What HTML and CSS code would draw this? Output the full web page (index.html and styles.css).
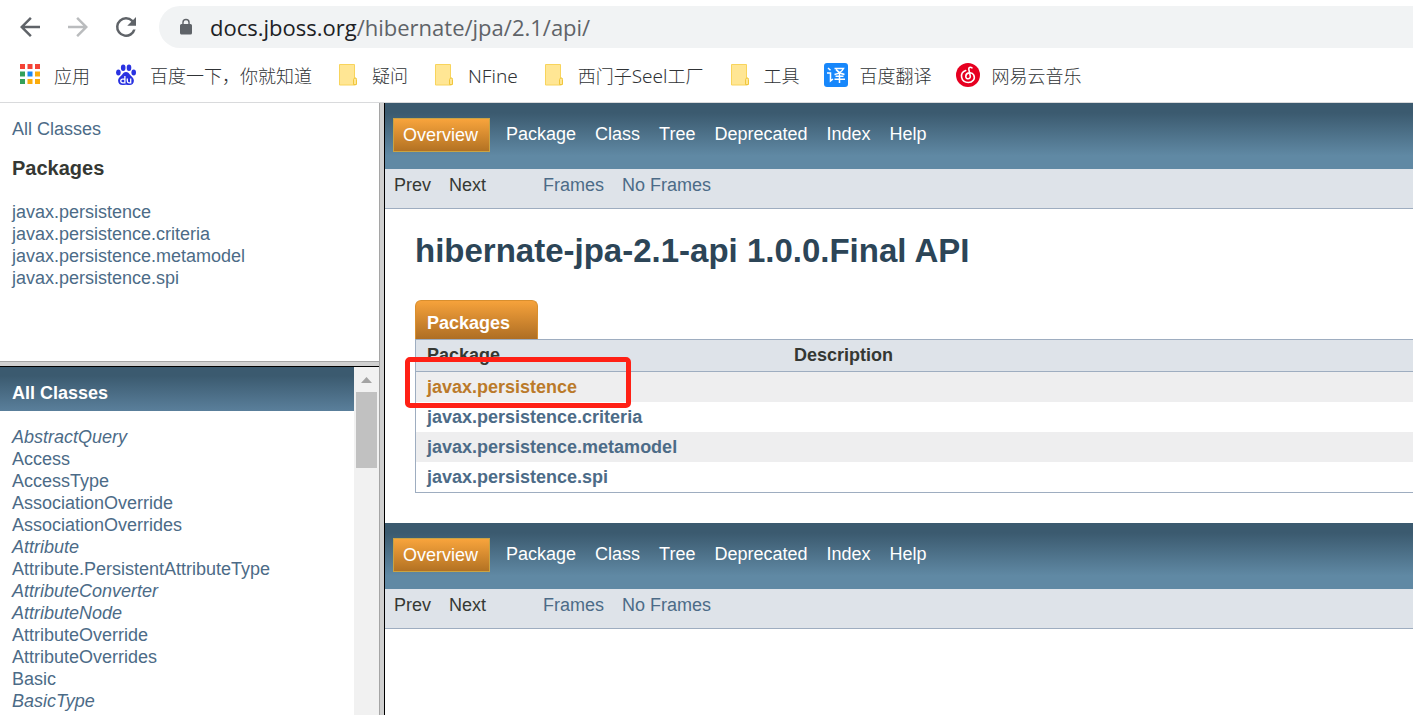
FILE: index.html
```html
<!DOCTYPE html>
<html lang="en">
<head>
<meta charset="utf-8">
<title>hibernate-jpa-2.1-api 1.0.0.Final API</title>
<link rel="stylesheet" href="styles.css">
</head>
<body>
<header class="browser">
  <div class="toolbar">
    <button class="tool" type="button" aria-label="Back"><svg viewBox="0 0 24 24"><path d="M20 11H7.8l5.6-5.6L12 4l-8 8 8 8 1.4-1.4L7.8 13H20z"/></svg></button>
    <button class="tool tool-off" type="button" aria-label="Forward" disabled><svg viewBox="0 0 24 24"><path d="M4 11h12.2l-5.6-5.6L12 4l8 8-8 8-1.4-1.4 5.6-5.6H4z"/></svg></button>
    <button class="tool" type="button" aria-label="Reload"><svg viewBox="0 0 24 24"><path d="M17.65 6.35A7.95 7.95 0 0 0 12 4a8 8 0 1 0 7.73 10h-2.08A6 6 0 1 1 12 6c1.66 0 3.14.69 4.22 1.78L13 11h7V4z"/></svg></button>
    <div class="address">
      <svg class="lock" viewBox="0 0 24 24"><path d="M18 8h-1V6A5 5 0 0 0 7 6v2H6a2 2 0 0 0-2 2v10c0 1.100.9 2 2 2h12a2 2 0 0 0 2-2V10a2 2 0 0 0-2-2zM8.900 8V6a3.100 3.100 0 0 1 6.200 0v2z"/></svg>
      <div class="url" role="textbox" aria-label="Address" contenteditable="true" spellcheck="false"><span class="host">docs.jboss.org</span>/hibernate/jpa/2.1/api/</div>
    </div>
  </div>
  <nav class="bookmarks" lang="zh-CN">
    <a class="bookmark" href="#"><svg class="mark" viewBox="0 0 24 24"><g fill="#f44336"><path d="M2 1h5v5H2zM9.500 1h5v5h-5zM17 1h5v5h-5z"/></g><path fill="#34a05a" d="M2 8.500h5v5H2zM2 16h5v5H2z"/><path fill="#1e88f0" d="M9.500 8.500h5v5h-5z"/><path fill="#fbac0c" d="M17 8.500h5v5h-5zM9.500 16h5v5h-5zM17 16h5v5h-5z"/></svg>应用</a>
    <a class="bookmark" href="#"><svg class="mark" viewBox="0 0 24 24"><g fill="#2932e1"><ellipse cx="4.400" cy="9.600" rx="2.300" ry="3"/><ellipse cx="9.200" cy="4.700" rx="2.300" ry="3.200"/><ellipse cx="15" cy="4.700" rx="2.300" ry="3.200"/><ellipse cx="19.700" cy="9.600" rx="2.300" ry="3"/><path d="M12 9c-2 0-3 1.400-4 2.700-1.200 1.600-3.900 2.900-3.900 6 0 2.700 1.900 4.300 4.300 4.300 1.400 0 2.200-.3 3.600-.3s2.200.3 3.600.3c2.400 0 4.300-1.600 4.300-4.300 0-3.100-2.700-4.400-3.900-6C15 10.400 14 9 12 9z"/></g><path fill="none" stroke="#fff" stroke-width="1.300" d="M10.900 13v6.800H8.600a1.800 1.800 0 0 1 0-3.700h2.300M13.300 15.500V18c0 1.300.5 1.800 1.600 1.800h1.800v-4.300"/></svg>百度一下，你就知道</a>
    <a class="bookmark" href="#"><svg class="mark" viewBox="0 0 24 24"><use href="#folder"/></svg>疑问</a>
    <a class="bookmark" href="#"><svg class="mark" viewBox="0 0 24 24"><use href="#folder"/></svg><span class="latin">NFine</span></a>
    <a class="bookmark" href="#"><svg class="mark" viewBox="0 0 24 24"><use href="#folder"/></svg><span>西门子<span class="latin">Seel</span>工厂</span></a>
    <a class="bookmark" href="#"><svg class="mark" viewBox="0 0 24 24"><g id="folder"><path fill="#ffe694" stroke="#f8d45c" d="M3.500 1.500h15v16.500h1v4h-16z"/><path fill="#ffe694" stroke="#f0c63c" d="M17.500 21.500v-5l1-1.500h1.500l.5 1.500v5z"/></g></svg>工具</a>
    <a class="bookmark" href="#"><svg class="mark" viewBox="0 0 24 24"><rect width="24" height="24" rx="3" fill="#1787fb"/><path fill="none" stroke="#fff" stroke-width="1.500" d="M4 5l2.500 2.300M3 10h3.500v8l2.500-2M10.500 5.500h9c-1.500 3-4.500 5-9 6M12 6.500c2 2.500 4.500 4 8.500 5M15.500 10.500V20M11.500 13.300h8M10.500 16.300h10.500"/></svg>百度翻译</a>
    <a class="bookmark" href="#"><svg class="mark" viewBox="0 0 24 24"><circle cx="12" cy="12" r="12" fill="#e60020"/><path fill="none" stroke="#fff" stroke-width="1.600" stroke-linecap="round" d="M16 4.800c-1.700-1.100-3.600-.3-3.200 1.500l1.500 6.900c.4 3.200-4.300 3.500-4.500.4-.2-4 6-5.400 8-1.500 1.800 4-1.300 7.400-5.500 7.400-7.600 0-9.300-9.500-2.600-12"/></svg>网易云音乐</a>
  </nav>
</header>
<div class="frames">
  <div class="sidebar">
    <nav class="packages">
      <a href="#">All Classes</a>
      <h2>Packages</h2>
      <ul>
        <li><a href="#">javax.persistence</a></li>
        <li><a href="#">javax.persistence.criteria</a></li>
        <li><a href="#">javax.persistence.metamodel</a></li>
        <li><a href="#">javax.persistence.spi</a></li>
      </ul>
    </nav>
    <div class="split-row"></div>
    <div class="classes">
      <nav class="class-pane">
        <h2>All Classes</h2>
        <ul>
          <li><a href="#"><i>AbstractQuery</i></a></li>
          <li><a href="#">Access</a></li>
          <li><a href="#">AccessType</a></li>
          <li><a href="#">AssociationOverride</a></li>
          <li><a href="#">AssociationOverrides</a></li>
          <li><a href="#"><i>Attribute</i></a></li>
          <li><a href="#">Attribute.PersistentAttributeType</a></li>
          <li><a href="#"><i>AttributeConverter</i></a></li>
          <li><a href="#"><i>AttributeNode</i></a></li>
          <li><a href="#">AttributeOverride</a></li>
          <li><a href="#">AttributeOverrides</a></li>
          <li><a href="#">Basic</a></li>
          <li><a href="#"><i>BasicType</i></a></li>
        </ul>
      </nav>
      <div class="scrollbar"><svg viewBox="0 0 11 6"><path d="M5.500 0L11 6H0z"/></svg><div class="thumb"></div></div>
    </div>
  </div>
  <div class="split-col"></div>
  <main class="overview">
    <nav>
      <ul class="top-nav">
        <li class="current">Overview</li>
        <li><a href="#">Package</a></li>
        <li><a href="#">Class</a></li>
        <li><a href="#">Tree</a></li>
        <li><a href="#">Deprecated</a></li>
        <li><a href="#">Index</a></li>
        <li><a href="#">Help</a></li>
      </ul>
      <div class="sub-nav">
        <ul><li>Prev</li><li>Next</li></ul>
        <ul><li><a href="#">Frames</a></li><li><a href="#">No Frames</a></li></ul>
      </div>
    </nav>
    <section class="content">
      <h1>hibernate-jpa-2.1-api 1.0.0.Final API</h1>
      <table>
        <caption><span>Packages</span></caption>
        <thead><tr><th class="name" scope="col">Package</th><th scope="col">Description</th></tr></thead>
        <tbody>
          <tr><td class="marked"><a class="hovered" href="#">javax.persistence</a><span class="marker"></span></td><td></td></tr>
          <tr><td><a href="#">javax.persistence.criteria</a></td><td></td></tr>
          <tr><td><a href="#">javax.persistence.metamodel</a></td><td></td></tr>
          <tr><td><a href="#">javax.persistence.spi</a></td><td></td></tr>
        </tbody>
      </table>
    </section>
    <nav>
      <ul class="top-nav">
        <li class="current">Overview</li>
        <li><a href="#">Package</a></li>
        <li><a href="#">Class</a></li>
        <li><a href="#">Tree</a></li>
        <li><a href="#">Deprecated</a></li>
        <li><a href="#">Index</a></li>
        <li><a href="#">Help</a></li>
      </ul>
      <div class="sub-nav">
        <ul><li>Prev</li><li>Next</li></ul>
        <ul><li><a href="#">Frames</a></li><li><a href="#">No Frames</a></li></ul>
      </div>
    </nav>
  </main>
</div>
</body>
</html>
```

FILE: styles.css
```css
* { box-sizing: border-box; }
html, body { height: 100%; }
body {
  margin: 0;
  display: flex;
  flex-direction: column;
  overflow: hidden;
  background: #fff;
  color: #353833;
  font: 18px/22px "Liberation Sans", Arial, sans-serif;
}
a { color: #4c6b87; text-decoration: none; }
ul { list-style: none; margin: 0; padding: 0; }
h1, h2 { margin: 0; }

/* Browser bars */
.browser { flex: none; border-bottom: 1px solid #d9dadc; }
.toolbar { display: flex; align-items: center; gap: 18px; padding: 6px 0 6px 15px; }
.tool { flex: none; padding: 0; border: 0; background: none; fill: #5f6368; }
.tool svg { display: block; width: 30px; height: 30px; }
.tool-off { fill: #babcbe; }
.address {
  flex: 1;
  display: flex;
  align-items: center;
  gap: 15px;
  height: 42px;
  padding-left: 18px;
  border-radius: 21px 0 0 21px;
  background: #f1f3f4;
}
.lock { width: 18px; height: 18px; fill: #5f6368; }
.url { outline: 0; color: #5f6368; font: 22px/30px "Open Sans", "Noto Sans", sans-serif; white-space: nowrap; }
.host { color: #202124; }
.bookmarks { display: flex; gap: 24px; height: 48px; padding: 0 0 4px 18px; }
.bookmark {
  display: flex;
  align-items: center;
  gap: 12px;
  color: #303336;
  font: 300 18px/24px "Noto Sans", "Noto Sans CJK SC", sans-serif;
  white-space: nowrap;
}
.latin { font-size: 19px; }
.mark { width: 24px; height: 24px; margin-bottom: 2px; }

/* Frames */
.frames { flex: 1; min-height: 0; display: grid; grid-template-columns: minmax(0, 379fr) 6px minmax(0, 1028fr); grid-template-rows: minmax(0, 1fr); }
.sidebar { display: grid; grid-template-rows: minmax(0, 258fr) 6px minmax(0, 348fr); }
.split-col { border-left: 1px solid #a5a5a5; border-right: 1px solid #000; background: #d0d0d0; }
.split-row { border-top: 1px solid #a5a5a5; border-bottom: 1px solid #000; background: #d0d0d0; }
.packages { padding: 15px 12px; overflow: hidden; }
.packages h2 { margin: 17px 0 22px; font-size: 20px; line-height: 22px; }
.classes { display: flex; overflow: hidden; }
.class-pane { flex: 1; overflow: hidden; }
.class-pane h2 {
  padding: 15px 12px 7px;
  background: linear-gradient(#3b5a6f 20%, #5a7f9b);
  color: #fff;
  font-size: 18px;
}
.class-pane ul { padding: 15px 12px; }
.scrollbar { width: 25px; padding: 10px 2px; background: #f1f1f1; }
.scrollbar svg { display: block; width: 11px; height: 6px; margin: 0 auto 9px; fill: #a3a3a3; }
.thumb { height: 76px; background: #c1c1c1; }

/* Overview frame */
.overview { overflow: hidden; }
.top-nav {
  display: flex;
  align-items: flex-start;
  gap: 19px;
  height: 66px;
  padding: 15px 8px;
  background: linear-gradient(#3b5a6f 15%, #6089a4 80%);
  color: #fff;
}
.top-nav a { color: #fff; }
.top-nav li { padding-top: 5px; }
.top-nav .current {
  margin-right: -3px;
  padding: 5px 11px 5px 9px;
  border: 1px solid #c9a343;
  background: linear-gradient(#f8a43c, #b37223);
}
.sub-nav {
  display: flex;
  gap: 57px;
  height: 40px;
  padding: 5px 9px;
  border-bottom: 1px solid #9eadc0;
  background: #dee3e9;
}
.sub-nav ul { display: flex; gap: 18px; }
.content { padding: 22px 0 30px 30px; }
h1 { color: #2c4557; font-size: 33px; line-height: 40px; }
table {
  width: 100%;
  margin-top: 29px;
  border-collapse: separate;
  border-spacing: 0;
  border: 1px solid #9eadc0;
  border-width: 0 0 1px 1px;
  table-layout: fixed;
}
caption { text-align: left; }
caption span {
  display: block;
  width: 123px;
  padding: 11px 11px 5px;
  border: 1px solid #d98f2e;
  border-bottom: 0;
  border-radius: 6px 6px 0 0;
  background: linear-gradient(#f6a23b, #ae6e24);
  color: #fff;
  font-weight: bold;
}
.name { width: 36.8%; }
th {
  padding: 4px 11px 5px;
  border: 1px solid #9eadc0;
  border-width: 1px 0;
  background: #dee3e9;
  text-align: left;
}
td { height: 30px; padding: 4px 11px; font-weight: bold; }
tbody tr:nth-child(odd) { background: #eeeeef; }
.hovered { color: #bb7a2a; }
.marked { position: relative; }
.marker {
  position: absolute;
  left: -11px;
  top: -15px;
  width: 226px;
  height: 51px;
  border: 5px solid #ff2015;
  border-radius: 5px;
  pointer-events: none;
}
```
